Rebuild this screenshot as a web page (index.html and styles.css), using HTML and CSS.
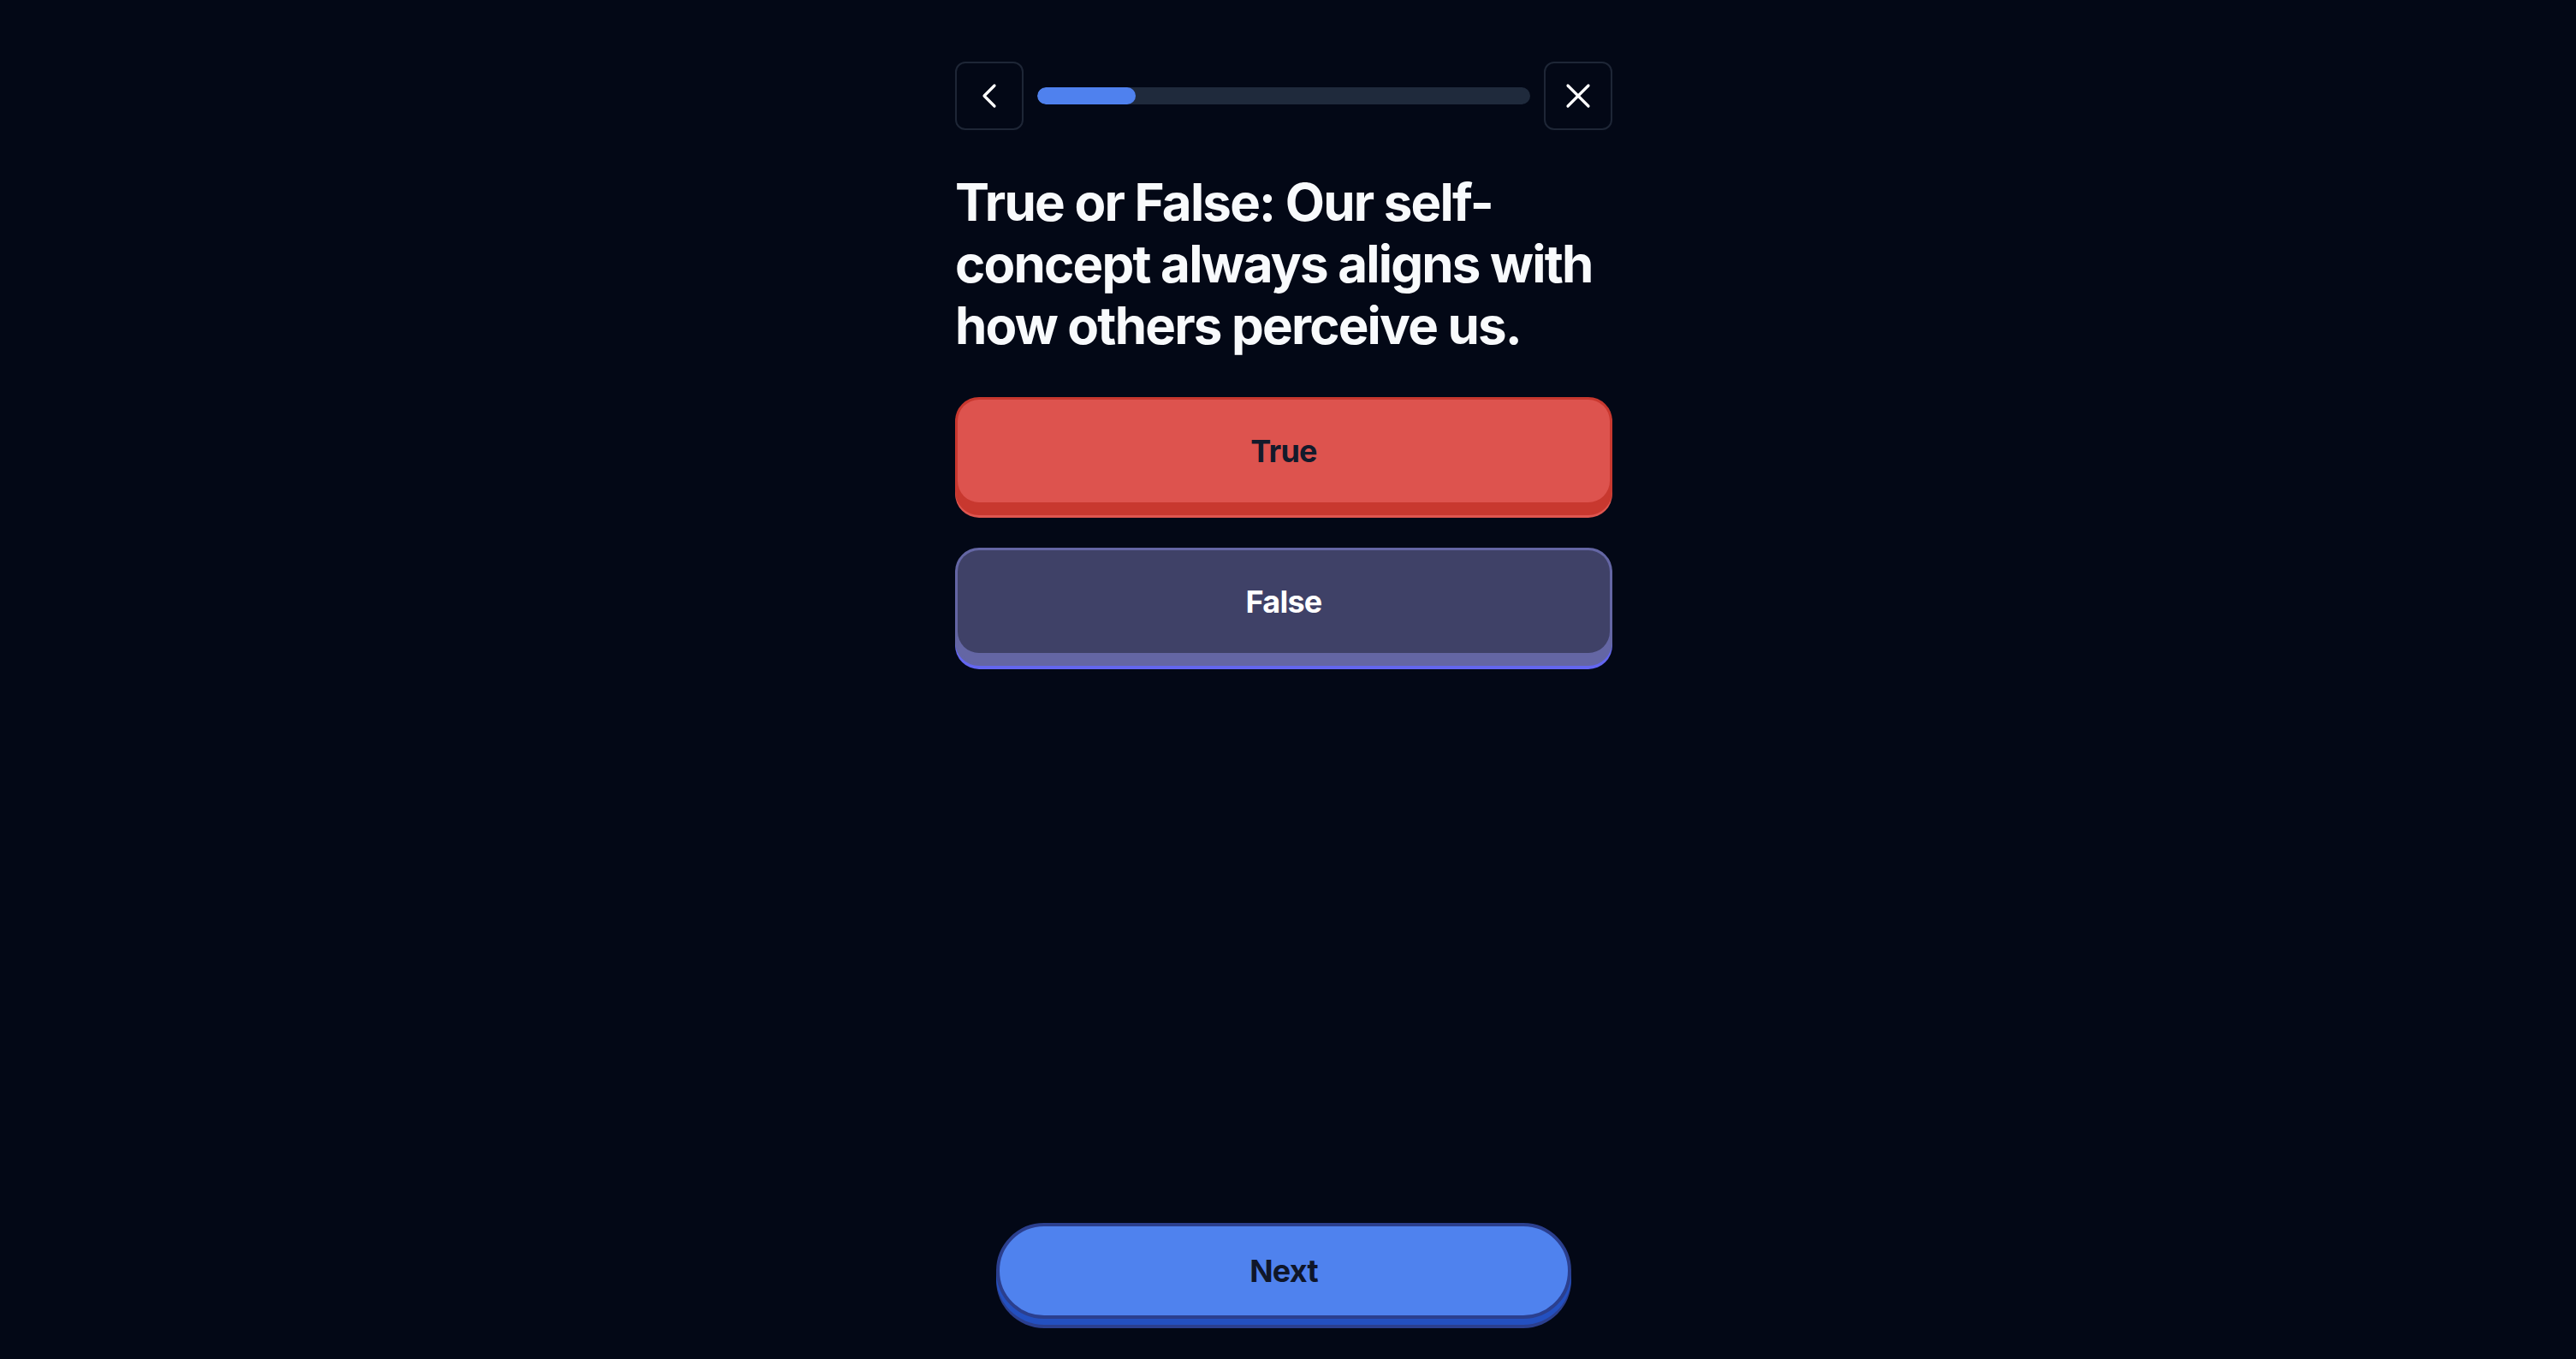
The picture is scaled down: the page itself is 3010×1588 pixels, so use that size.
FILE: index.html
```html
<!DOCTYPE html>
<html lang="en">
<head>
<meta charset="utf-8">
<title>Quiz</title>
<link rel="stylesheet" href="styles.css">
</head>
<body>
<div class="page">
  <main class="quiz">
    <header class="topbar">
      <button class="icon-btn" aria-label="Back">
        <svg width="48" height="48" viewBox="0 0 24 24" fill="none" stroke="currentColor" stroke-width="1.6" stroke-linecap="round" stroke-linejoin="round"><path d="m15 18-6-6 6-6"/></svg>
      </button>
      <div class="progress"><div class="progress-fill" style="width:20%"></div></div>
      <button class="icon-btn" aria-label="Close">
        <svg width="48" height="48" viewBox="0 0 24 24" fill="none" stroke="currentColor" stroke-width="1.6" stroke-linecap="round" stroke-linejoin="round"><path d="M18 6 6 18"/><path d="m6 6 12 12"/></svg>
      </button>
    </header>
    <h1 class="question">True or False: Our self-concept always aligns with how others perceive us.</h1>
    <div class="options">
      <button class="opt opt-true"><span class="face">True</span></button>
      <button class="opt opt-false"><span class="face">False</span></button>
    </div>
  </main>
  <footer class="footer">
    <button class="next">Next</button>
  </footer>
</div>
</body>
</html>
```
FILE: styles.css
```css
* { box-sizing: border-box; }
html, body { margin: 0; padding: 0; }
body {
  background: #030816;
  font-family: Inter, "Noto Sans", "Liberation Sans", sans-serif;
  color: #f8fafc;
}
button { font-family: inherit; cursor: pointer; }
.page {
  min-height: 100vh;
  display: flex;
  flex-direction: column;
  align-items: center;
  padding-right: 10px;
}
.quiz {
  width: 768px;
  padding-top: 72px;
  flex: 1;
}
.topbar {
  display: flex;
  align-items: center;
  gap: 16px;
  height: 80px;
}
.icon-btn {
  flex: none;
  width: 80px;
  height: 80px;
  border: 2px solid #1e2636;
  border-radius: 12px;
  background: transparent;
  color: #ffffff;
  display: flex;
  align-items: center;
  justify-content: center;
  padding: 0;
}
.progress {
  flex: 1;
  height: 20px;
  border-radius: 10px;
  background: #1f2a3c;
  overflow: hidden;
}
.progress-fill {
  height: 100%;
  background: #4f81ee;
  border-radius: 10px;
}
.question {
  margin: 48px 0 0;
  font-size: 60px;
  line-height: 72px;
  font-weight: 700;
  color: #f8fafc;
  letter-spacing: -1.8px;
}
.options {
  margin-top: 48px;
  display: flex;
  flex-direction: column;
  gap: 38px;
}
.opt {
  display: block;
  width: 100%;
  height: 138px;
  padding: 0 0 12px 0;
  border: 3px solid var(--edge);
  border-radius: 28px;
  background: var(--edge);
  box-shadow: 0 var(--glow-y) 0 var(--glow);
}
.opt .face {
  display: flex;
  align-items: center;
  justify-content: center;
  height: 100%;
  border-radius: 25px;
  background: var(--face);
  font-size: 36px;
  font-weight: 700;
  letter-spacing: -0.8px;
  color: var(--ink);
}
.opt-true {
  --edge: #c8382f;
  --face: #dd534e;
  --glow: #df5650;
  --glow-y: 3px;
  --ink: #131a2b;
}
.opt-false {
  --edge: #6466a4;
  --face: #3f4167;
  --glow: #6366f1;
  --glow-y: 4px;
  --ink: #ffffff;
}
.footer {
  padding-bottom: 47px;
}
.next {
  display: block;
  width: 672px;
  height: 112px;
  border: 4px solid #2b3f8e;
  border-radius: 999px;
  background: #4f82ee;
  box-shadow: 0 7px 0 #2350c0, 0 11px 0 #2b3f8e;
  font-size: 36px;
  font-weight: 700;
  letter-spacing: -0.8px;
  color: #0f1629;
}
```
